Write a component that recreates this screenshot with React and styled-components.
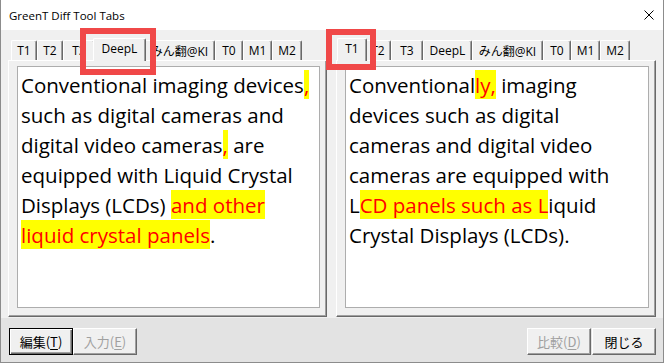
import React from "react";
import styled, { createGlobalStyle, css } from "styled-components";

const UI_FONT = `"Open Sans", "Noto Sans CJK JP", sans-serif`;
const JP_FONT = `"Noto Sans CJK JP", "Open Sans", sans-serif`;
const TEXT_FONT = `"Open Sans", "Noto Sans CJK JP", sans-serif`;

const GlobalStyle = createGlobalStyle`
  html, body { margin: 0; padding: 0; background: #ffffff; }
  body { font-family: ${UI_FONT}; }
  *, *::before, *::after { box-sizing: border-box; }
`;

const Window = styled.div`
  position: relative;
  width: 664px;
  height: 363px;
  display: flex;
  flex-direction: column;
  border: 1px solid #8c8c8c;
  border-top: none;
  background: #f0f0f0;
  overflow: hidden;
`;

const TitleBar = styled.div`
  flex: none;
  height: 30px;
  background: #ffffff;
  display: flex;
  align-items: center;
  justify-content: space-between;
  padding: 0 9px 0 8px;
  font: 11.5px ${UI_FONT};
  color: #000;
`;

const CloseGlyph = styled.svg`
  width: 10px;
  height: 10px;
  display: block;
`;

const Panes = styled.div`
  flex: none;
  display: grid;
  grid-template-columns: 319px 320px;
  column-gap: 9px;
  padding: 8px 0 1px 7px;
  background: #f0f0f0;
`;

const TabControl = styled.div`
  display: flex;
  flex-direction: column;
`;

const TabStrip = styled.div`
  height: 22px;
  display: flex;
  align-items: flex-end;
  padding-left: 3px;
`;

const Tab = styled.div`
  position: relative;
  z-index: ${(p) => (p.$active ? 2 : 1)};
  flex: none;
  width: ${(p) => p.$width + (p.$active ? 4 : 0)}px;
  height: ${(p) => (p.$active ? 23 : 20)}px;
  margin: 0 ${(p) => (p.$active ? -2 : 0)}px ${(p) => (p.$active ? -1 : 0)}px;
  padding-bottom: ${(p) => (p.$active ? 3 : 0)}px;
  display: flex;
  align-items: center;
  justify-content: center;
  background: #f0f0f0;
  border-top: 1px solid #ffffff;
  border-left: 1px solid #ffffff;
  border-right: 1px solid #696969;
  border-radius: 2px 2px 0 0;
  box-shadow: inset -1px 0 #a0a0a0;
  font: 12px ${UI_FONT};
  color: #000;
  white-space: nowrap;
`;

const TabPage = styled.div`
  position: relative;
  z-index: 1;
  height: 257px;
  padding: 5px 6px 8px 8px;
  background: #f0f0f0;
  border-top: 1px solid #ffffff;
  border-left: 1px solid #ffffff;
  border-right: 1px solid #696969;
  border-bottom: 1px solid #696969;
  box-shadow: inset -1px -1px #a0a0a0;
`;

const TextBox = styled.div`
  height: 100%;
  background: #ffffff;
  border: 1px solid #adadad;
  padding: 3px 3px;
  font: 20.5px/30px ${TEXT_FONT};
  color: #000;
  white-space: nowrap;
  overflow: hidden;
`;

const Diff = styled.span`
  background: #ffff00;
  color: #ff0000;
  padding-top: 1px;
`;

const Footer = styled.div`
  flex: 1;
  display: flex;
  align-items: flex-start;
  padding: 10px 7px 0 8px;
  background: #e3e3e3;
`;

const ButtonGroup = styled.div`
  display: flex;
  gap: ${(p) => p.$gap}px;
  margin-left: ${(p) => (p.$push ? "auto" : "0")};
`;

const Button = styled.button`
  width: 64px;
  height: 27px;
  padding: 0;
  font: 13px ${JP_FONT};
  color: ${(p) => (p.disabled ? "#a0a0a0" : "#000000")};
  background: #f0f0f0;
  border: 1px solid;
  border-color: #ffffff #696969 #696969 #ffffff;
  box-shadow: inset -1px -1px #a0a0a0;
  ${(p) =>
    p.$default &&
    css`
      border-color: #000000;
      box-shadow: inset 1px 1px #ffffff, inset -1px -1px #696969,
        inset -2px -2px #a0a0a0;
    `}
  u { text-underline-offset: 2px; }
`;

const Annotation = styled.div`
  position: absolute;
  z-index: 10;
  left: ${(p) => p.$left}px;
  top: ${(p) => p.$top}px;
  width: ${(p) => p.$width}px;
  height: ${(p) => p.$height}px;
  border: 6px solid #f04848;
  pointer-events: none;
`;

const TABS = [
  { label: "T1", width: 26 },
  { label: "T2", width: 26 },
  { label: "T3", width: 32 },
  { label: "DeepL", width: 49 },
  { label: "みん翻@KI", width: 71 },
  { label: "T0", width: 28 },
  { label: "M1", width: 29 },
  { label: "M2", width: 30 },
];

function TabbedPane({ active, children }) {
  return (
    <TabControl>
      <TabStrip>
        {TABS.map((t) => (
          <Tab key={t.label} $width={t.width} $active={t.label === active}>
            {t.label}
          </Tab>
        ))}
      </TabStrip>
      <TabPage>
        <TextBox>{children}</TextBox>
      </TabPage>
    </TabControl>
  );
}

export default function App() {
  return (
    <>
      <GlobalStyle />
      <Window>
        <TitleBar>
          <span>GreenT Diff Tool Tabs</span>
          <CloseGlyph viewBox="0 0 10 10">
            <path d="M0.5 0.5 L9.5 9.5 M9.5 0.5 L0.5 9.5" stroke="#000" strokeWidth="1" fill="none" />
          </CloseGlyph>
        </TitleBar>
        <Panes>
          <TabbedPane active="DeepL">
            Conventional imaging devices<Diff>,</Diff>
            <br />
            such as digital cameras and
            <br />
            digital video cameras<Diff>,</Diff> are
            <br />
            equipped with Liquid Crystal
            <br />
            Displays (LCDs) <Diff>and other </Diff>
            <br />
            <Diff>liquid crystal panels</Diff>.
          </TabbedPane>
          <TabbedPane active="T1">
            Conventional<Diff>ly,</Diff> imaging
            <br />
            devices such as digital
            <br />
            cameras and digital video
            <br />
            cameras are equipped with
            <br />
            L<Diff>CD panels such as L</Diff>iquid
            <br />
            Crystal Displays (LCDs).
          </TabbedPane>
        </Panes>
        <Footer>
          <ButtonGroup $gap={0}>
            <Button $default>
              編集(<u>T</u>)
            </Button>
            <Button disabled>
              入力(<u>E</u>)
            </Button>
          </ButtonGroup>
          <ButtonGroup $gap={1} $push>
            <Button disabled>
              比較(<u>D</u>)
            </Button>
            <Button>閉じる</Button>
          </ButtonGroup>
        </Footer>
        <Annotation $left={79} $top={28} $width={76} $height={47} />
        <Annotation $left={325} $top={29} $width={50} $height={41} />
      </Window>
    </>
  );
}
